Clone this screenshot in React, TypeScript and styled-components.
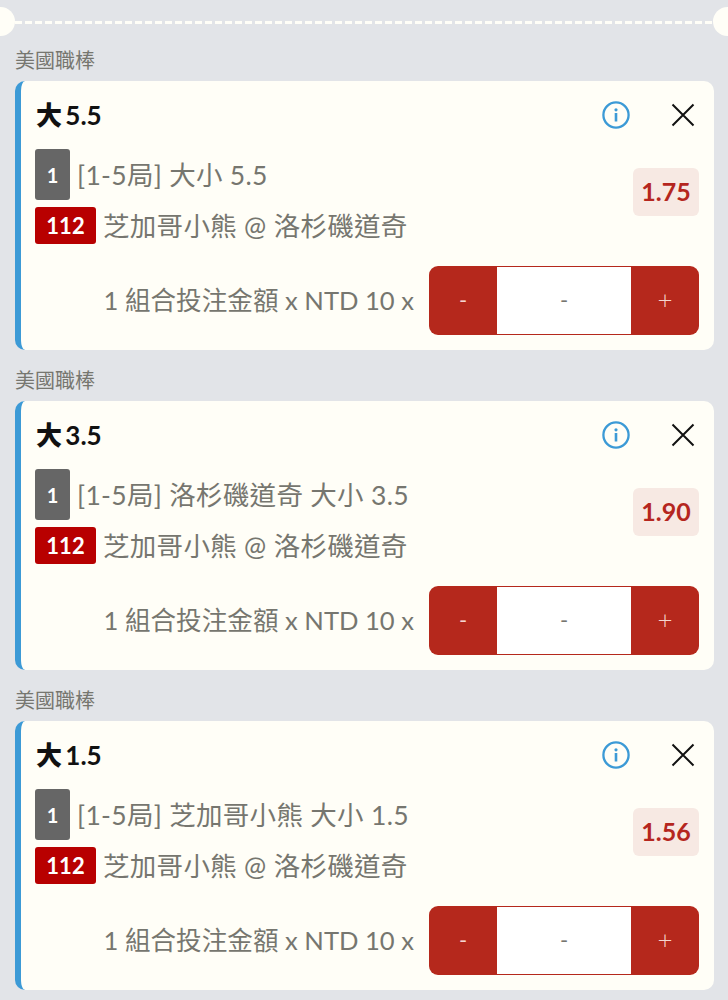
import styled, { createGlobalStyle } from "styled-components";

interface IBet {
  title: string;
  market: string;
  odds: string;
}

const bets: IBet[] = [
  { title: "5.5", market: "[1-5局] 大小 5.5", odds: "1.75" },
  { title: "3.5", market: "[1-5局] 洛杉磯道奇 大小 3.5", odds: "1.90" },
  { title: "1.5", market: "[1-5局] 芝加哥小熊 大小 1.5", odds: "1.56" },
];

function App() {
  return (
    <Page>
      <GlobalStyle />
      <Ticket>
        <Notch $side="left" />
        <Dashes />
        <Notch $side="right" />
      </Ticket>
      {bets.map((bet) => (
        <Section key={bet.title}>
          <League>美國職棒</League>
          <Card>
            <TitleRow>
              <Title>
                <b>大</b> {bet.title}
              </Title>
              <Actions>
                <svg width="30" height="30" viewBox="0 0 30 30" fill="none">
                  <circle cx="15" cy="15" r="12.6" stroke="#3c9ad6" strokeWidth="2.3" />
                  <circle cx="15" cy="9.8" r="1.6" fill="#3c9ad6" />
                  <rect x="13.7" y="13" width="2.6" height="8.5" fill="#3c9ad6" />
                </svg>
                <svg width="24" height="24" viewBox="0 0 24 24" fill="none">
                  <path d="M1.5 1.5L22.5 22.5M22.5 1.5L1.5 22.5" stroke="#111" strokeWidth="2" />
                </svg>
              </Actions>
            </TitleRow>
            <InfoRow>
              <Lines>
                <Line>
                  <GreyBadge>1</GreyBadge>
                  <Market>{bet.market}</Market>
                </Line>
                <Line>
                  <RedBadge>112</RedBadge>
                  <Market>芝加哥小熊 @ 洛杉磯道奇</Market>
                </Line>
              </Lines>
              <Odds>{bet.odds}</Odds>
            </InfoRow>
            <StakeRow>
              <StakeLabel>1 組合投注金額 x NTD 10 x</StakeLabel>
              <Stepper>
                <StepButton>-</StepButton>
                <StepValue>-</StepValue>
                <StepButton $plus>+</StepButton>
              </Stepper>
            </StakeRow>
          </Card>
        </Section>
      ))}
    </Page>
  );
}

export default App;

const GlobalStyle = createGlobalStyle`
  html, body {
    margin: 0;
    padding: 0;
    background: #e2e4e8;
  }
  body {
    font-family: Lato, "Noto Sans CJK TC", sans-serif;
  }
`;

const Page = styled.div`
  width: 728px;
  height: 1000px;
  overflow: hidden;
  position: relative;
  background: #e2e4e8;
`;

const Ticket = styled.div`
  height: 44px;
  padding: 21px 15px 0;
  box-sizing: border-box;
`;

const Dashes = styled.div`
  height: 3px;
  background: repeating-linear-gradient(90deg, #fffef7 0 7px, transparent 7px 10px);
`;

const Notch = styled.div<{ $side: "left" | "right" }>`
  position: absolute;
  top: 7px;
  ${(p) => p.$side}: -14px;
  width: 29px;
  height: 29px;
  border-radius: 50%;
  background: #fffef7;
`;

const Section = styled.section`
  padding: 0 14px 0 15px;
  height: 320px;
`;

const League = styled.div`
  height: 37px;
  line-height: 33px;
  font-size: 20px;
  color: #76766f;
`;

const Card = styled.div`
  height: 269px;
  box-sizing: border-box;
  background: #fffef7;
  border-left: 6px solid #3c9ad6;
  border-radius: 10px;
  padding: 16px 15px 15px 14px;
  display: flex;
  flex-direction: column;
`;

const TitleRow = styled.div`
  display: flex;
  justify-content: space-between;
  align-items: center;
  height: 36px;
`;

const Title = styled.div`
  font-size: 26px;
  font-weight: 700;
  color: #111;
  padding: 0 0 3px 1px;
  word-spacing: -3px;
`;

const Actions = styled.div`
  display: flex;
  align-items: center;
  gap: 40px;
  padding-right: 4px;
`;

const InfoRow = styled.div`
  display: flex;
  justify-content: space-between;
  align-items: flex-start;
  margin-top: 16px;
`;

const Lines = styled.div`
  display: flex;
  flex-direction: column;
  gap: 7px;
`;

const Line = styled.div`
  display: flex;
  align-items: center;
  gap: 7px;
`;

const GreyBadge = styled.span`
  width: 35px;
  height: 51px;
  background: #666;
  color: #fff;
  border-radius: 3px;
  font-size: 20px;
  font-weight: 700;
  display: flex;
  align-items: center;
  justify-content: center;
`;

const RedBadge = styled.span`
  width: 61px;
  height: 37px;
  background: #b80000;
  color: #fff;
  border-radius: 3px;
  font-size: 22px;
  font-weight: 700;
  display: flex;
  align-items: center;
  justify-content: center;
`;

const Market = styled.span`
  font-size: 26.5px;
  line-height: 30px;
  color: #76766f;
  letter-spacing: 0.3px;
  padding-top: 1px;
`;

const Odds = styled.div`
  width: 66px;
  height: 48px;
  margin-top: 19px;
  padding-bottom: 2px;
  box-sizing: border-box;
  background: #f7e9e3;
  color: #b5261e;
  border-radius: 6px;
  font-size: 25px;
  font-weight: 700;
  display: flex;
  align-items: center;
  justify-content: center;
`;

const StakeRow = styled.div`
  display: flex;
  justify-content: flex-end;
  align-items: center;
  gap: 15px;
  margin-top: 22px;
`;

const StakeLabel = styled.span`
  font-size: 25.6px;
  line-height: 30px;
  color: #76766f;
  padding-bottom: 2px;
`;

const Stepper = styled.div`
  width: 270px;
  height: 69px;
  display: flex;
  border-radius: 9px;
  overflow: hidden;
  background: #b5281c;
`;

const StepButton = styled.div<{ $plus?: boolean }>`
  width: 68px;
  padding-bottom: 3px;
  box-sizing: border-box;
  display: flex;
  align-items: center;
  justify-content: center;
  color: #f5d6d0;
  font-size: ${(p) => (p.$plus ? "26px" : "22px")};
  font-weight: ${(p) => (p.$plus ? 300 : 400)};
`;

const StepValue = styled.div`
  flex: 1;
  margin: 1px 0;
  padding-bottom: 3px;
  background: #fff;
  color: #76766f;
  font-size: 22px;
  display: flex;
  align-items: center;
  justify-content: center;
`;
